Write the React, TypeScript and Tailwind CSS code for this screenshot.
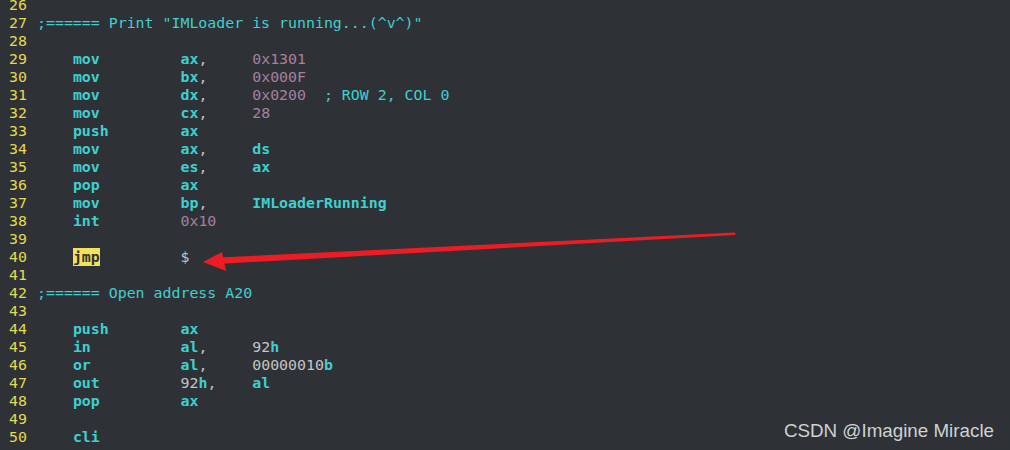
type Tok = { t: string; c?: "kw" | "num" | "txt" | "com" | "hl" };

const kw = (t: string): Tok => ({ t, c: "kw" });
const num = (t: string): Tok => ({ t, c: "num" });
const txt = (t: string): Tok => ({ t, c: "txt" });
const com = (t: string): Tok => ({ t, c: "com" });

const lines: { n: number; toks: Tok[] }[] = [
  { n: 26, toks: [] },
  { n: 27, toks: [com(';====== Print "IMLoader is running...(^v^)"')] },
  { n: 28, toks: [] },
  { n: 29, toks: [txt("    "), kw("mov"), txt("         "), kw("ax"), txt(",     "), num("0x1301")] },
  { n: 30, toks: [txt("    "), kw("mov"), txt("         "), kw("bx"), txt(",     "), num("0x000F")] },
  { n: 31, toks: [txt("    "), kw("mov"), txt("         "), kw("dx"), txt(",     "), num("0x0200"), com("  ; ROW 2, COL 0")] },
  { n: 32, toks: [txt("    "), kw("mov"), txt("         "), kw("cx"), txt(",     "), num("28")] },
  { n: 33, toks: [txt("    "), kw("push"), txt("        "), kw("ax")] },
  { n: 34, toks: [txt("    "), kw("mov"), txt("         "), kw("ax"), txt(",     "), kw("ds")] },
  { n: 35, toks: [txt("    "), kw("mov"), txt("         "), kw("es"), txt(",     "), kw("ax")] },
  { n: 36, toks: [txt("    "), kw("pop"), txt("         "), kw("ax")] },
  { n: 37, toks: [txt("    "), kw("mov"), txt("         "), kw("bp"), txt(",     "), kw("IMLoaderRunning")] },
  { n: 38, toks: [txt("    "), kw("int"), txt("         "), num("0x10")] },
  { n: 39, toks: [] },
  { n: 40, toks: [txt("    "), { t: "jmp", c: "hl" }, txt("         $")] },
  { n: 41, toks: [] },
  { n: 42, toks: [com(";====== Open address A20")] },
  { n: 43, toks: [] },
  { n: 44, toks: [txt("    "), kw("push"), txt("        "), kw("ax")] },
  { n: 45, toks: [txt("    "), kw("in"), txt("          "), kw("al"), txt(",     92"), kw("h")] },
  { n: 46, toks: [txt("    "), kw("or"), txt("          "), kw("al"), txt(",     00000010"), kw("b")] },
  { n: 47, toks: [txt("    "), kw("out"), txt("         92"), kw("h"), txt(",    "), kw("al")] },
  { n: 48, toks: [txt("    "), kw("pop"), txt("         "), kw("ax")] },
  { n: 49, toks: [] },
  { n: 50, toks: [txt("    "), kw("cli")] },
];

function Token({ tok }: { tok: Tok }) {
  if (tok.c === "kw") return <span className="font-bold text-[#3fcfd0]">{tok.t}</span>;
  if (tok.c === "num") return <span className="text-[#a97f9f]">{tok.t}</span>;
  if (tok.c === "com") return <span className="text-[#3fcfd0]">{tok.t}</span>;
  if (tok.c === "hl")
    return <span className="bg-[#f2e15a] font-bold text-[#2e3236]">{tok.t}</span>;
  return <span className="text-[#c4c4c4]">{tok.t}</span>;
}

export default function App() {
  return (
    <div className="relative w-[1010px] h-[450px] overflow-hidden bg-[#2e3236] font-['DejaVu_Sans_Mono',monospace] text-[14.9px] leading-[18px]">
      <div className="-mt-[4px] flex flex-col pl-[9px]">
        {lines.map((l) => (
          <div key={l.n} className="flex h-[18px] whitespace-pre">
            <span className="w-[28px] text-[#e5d94f]">{l.n}</span>
            {l.toks.map((tok, i) => (
              <Token key={i} tok={tok} />
            ))}
          </div>
        ))}
      </div>

      {/* red annotation arrow */}
      <svg className="absolute left-0 top-0" width="1010" height="450" viewBox="0 0 1010 450">
        <polygon points="218,257.5 735,232.5 735.5,235 218,264" fill="#ec1c24" />
        <polygon points="203,262 222,252 226,271" fill="#ec1c24" />
      </svg>

      <div className="absolute right-[16px] bottom-[8px] font-['Liberation_Sans',Arial,sans-serif] text-[18.8px] leading-[22px] text-[#cfd1d2]">
        CSDN @Imagine Miracle
      </div>
    </div>
  );
}
